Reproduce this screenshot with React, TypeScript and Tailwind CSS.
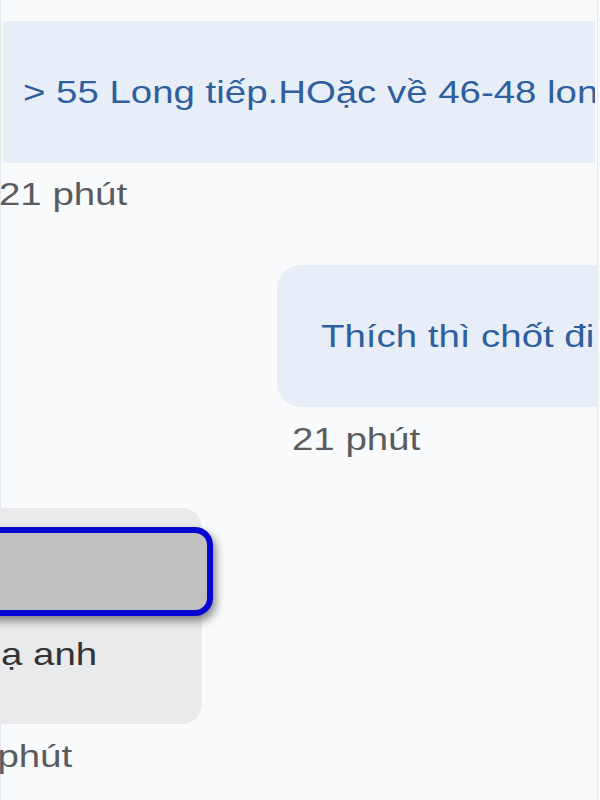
const FONT = "font-['Liberation_Sans',Arial,sans-serif]"

// chữ trong ảnh gốc bị kéo giãn ngang
function Wide({ children, className = '' }: { children: React.ReactNode; className?: string }) {
  return <span className={`inline-block origin-left scale-x-[1.2] whitespace-nowrap ${className}`}>{children}</span>
}

export default function App() {
  return (
    <div className={`h-[800px] w-[600px] overflow-hidden bg-[#f9fafb] ${FONT}`}>
      <div className="flex h-full w-[598px] flex-col border-x border-[#e4e7eb] pt-[21px]">
        {/* tin nhắn 1 */}
        <div className="ml-[2px] flex h-[142px] w-[592px] items-center overflow-hidden bg-[#e8eef8] pl-[20px]">
          <Wide className="text-[32px] leading-[37px] text-[#2f5f9e]">&gt; 55 Long tiếp.HOặc về 46-48 long</Wide>
        </div>
        <div className="mt-[13px] -ml-[2px] text-[32px] leading-[37px] text-[#595c61]">
          <Wide>21 phút</Wide>
        </div>

        {/* tin nhắn 2 */}
        <div className="mt-[52px] ml-[276px] flex h-[142px] w-[320px] items-center overflow-hidden rounded-l-[24px] bg-[#e8eef8] pl-[44px]">
          <Wide className="text-[32px] leading-[37px] text-[#2f5f9e]">Thích thì chốt đi</Wide>
        </div>
        <div className="mt-[14px] ml-[291px] text-[32px] leading-[37px] text-[#595c61]">
          <Wide>21 phút</Wide>
        </div>

        {/* tin nhắn 3 */}
        <div className="mt-[50px] -ml-[41px] flex h-[216px] w-[242px] flex-col rounded-r-[20px] bg-[#e9eaec] pt-[19px]">
          <div className="-mr-[11px] h-[89px] rounded-r-[18px] border-[6px] border-[#0707d2] bg-[#c0c0c0] shadow-[3px_5px_8px_rgba(0,0,0,0.45)]" />
          <div className="mt-[20px] pl-[41px] text-[32px] leading-[37px] text-[#333333]">
            <Wide>ạ anh</Wide>
          </div>
        </div>
        <div className="mt-[14px] -ml-[57px] text-[32px] leading-[37px] text-[#595c61]">
          <Wide>21 phút</Wide>
        </div>
      </div>
    </div>
  )
}
